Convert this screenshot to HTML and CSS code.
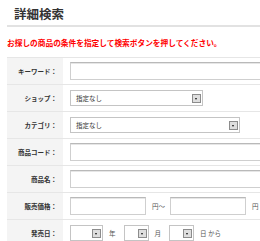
FILE: index.html
```html
<!DOCTYPE html>
<html lang="ja">
<head>
  <meta charset="UTF-8" />
  <meta name="viewport" content="width=device-width, initial-scale=1" />
  <title>詳細検索</title>
  <link rel="stylesheet" href="styles.css">
</head>
<body>

  <div class="page">
    <h1 class="title">詳細検索</h1>
    <p class="notice">お探しの商品の条件を指定して検索ボタンを押してください。</p>

    <div class="search-form">
      <div class="row">
        <div class="row-label">キーワード：</div>
        <div class="row-value"><input type="text" class="text-field wide" /></div>
      </div>
      <div class="row">
        <div class="row-label">ショップ：</div>
        <div class="row-value">
          <div class="fake-select shop"><span>指定なし</span><span class="drop-btn"></span></div>
        </div>
      </div>
      <div class="row">
        <div class="row-label">カテゴリ：</div>
        <div class="row-value">
          <div class="fake-select category"><span>指定なし</span><span class="drop-btn"></span></div>
        </div>
      </div>
      <div class="row">
        <div class="row-label">商品コード：</div>
        <div class="row-value"><input type="text" class="text-field wide" /></div>
      </div>
      <div class="row">
        <div class="row-label">商品名：</div>
        <div class="row-value"><input type="text" class="text-field wide" /></div>
      </div>
      <div class="row">
        <div class="row-label">販売価格：</div>
        <div class="row-value">
          <input type="text" class="text-field price" />
          <span class="unit">円〜</span>
          <input type="text" class="text-field price" />
          <span class="unit">円</span>
        </div>
      </div>
      <div class="row">
        <div class="row-label">発売日：</div>
        <div class="row-value">
          <div class="fake-select year"><span class="drop-btn"></span></div>
          <span class="unit date-unit">年</span>
          <div class="fake-select day"><span class="drop-btn"></span></div>
          <span class="unit date-unit">月</span>
          <div class="fake-select day"><span class="drop-btn"></span></div>
          <span class="unit">日 から</span>
        </div>
      </div>
    </div>
  </div>

</body>
</html>
```

FILE: styles.css
```css
html, body {
  margin: 0;
  padding: 0;
  overflow: hidden;
  background: #fff;
}

body {
  font-family: "Noto Sans CJK JP", "Noto Sans", sans-serif;
  color: #333;
}

.page {
  width: 320px;
  padding-left: 7px;
}

.title {
  margin: 7px 0 0;
  padding: 0 0 5px 7px;
  font-size: 12.5px;
  line-height: 13px;
  font-weight: bold;
  color: #333;
  border-bottom: 2px solid #e2e2e2;
}

.notice {
  margin: 12px 0 10px;
  font-size: 7.7px;
  line-height: 8px;
  font-weight: bold;
  color: #f00;
}

.search-form {
  border-top: 1px solid #e6e6e6;
}

.row {
  display: flex;
  height: 27px;
  box-sizing: border-box;
  border-bottom: 1px solid #e6e6e6;
}

.row-label {
  width: 56px;
  flex-shrink: 0;
  box-sizing: border-box;
  padding-right: 6px;
  background: #f4f4f4;
  display: flex;
  align-items: center;
  justify-content: flex-end;
  white-space: nowrap;
  font-size: 6.5px;
  font-weight: bold;
  color: #333;
}

.row-value {
  flex: 1;
  display: flex;
  align-items: center;
  padding-left: 7px;
}

.text-field {
  height: 18px;
  box-sizing: border-box;
  margin: 0;
  padding: 0 3px;
  border: 1px solid #cfcfcf;
  border-top-color: #b9b9b9;
  box-shadow: inset 0 1px 0 #e6e6e6;
  background: #fff;
  outline: none;
}

.text-field.wide {
  width: 250px;
}

.text-field.price {
  width: 76px;
}

.unit {
  margin: 0 5px 0 6px;
  font-size: 6.5px;
  color: #555;
  white-space: nowrap;
}

.date-unit {
  margin: 0 8px 0 6px;
}

.fake-select {
  height: 16px;
  box-sizing: border-box;
  border: 1px solid #c4c4c4;
  background: #fff;
  display: flex;
  align-items: center;
  justify-content: space-between;
  padding: 0 1px 0 5px;
  font-size: 6.5px;
  color: #333;
}

.fake-select.shop {
  width: 133px;
}

.fake-select.category {
  width: 170px;
}

.fake-select.year {
  width: 33px;
}

.fake-select.day {
  width: 25px;
}

.drop-btn {
  width: 9px;
  height: 9px;
  box-sizing: border-box;
  border: 1px solid #8c8c8c;
  background: #dedede;
  margin-left: auto;
  position: relative;
}

.drop-btn::after {
  content: "";
  position: absolute;
  left: 2px;
  top: 3px;
  border-left: 1.5px solid transparent;
  border-right: 1.5px solid transparent;
  border-top: 2px solid #111;
}
```
